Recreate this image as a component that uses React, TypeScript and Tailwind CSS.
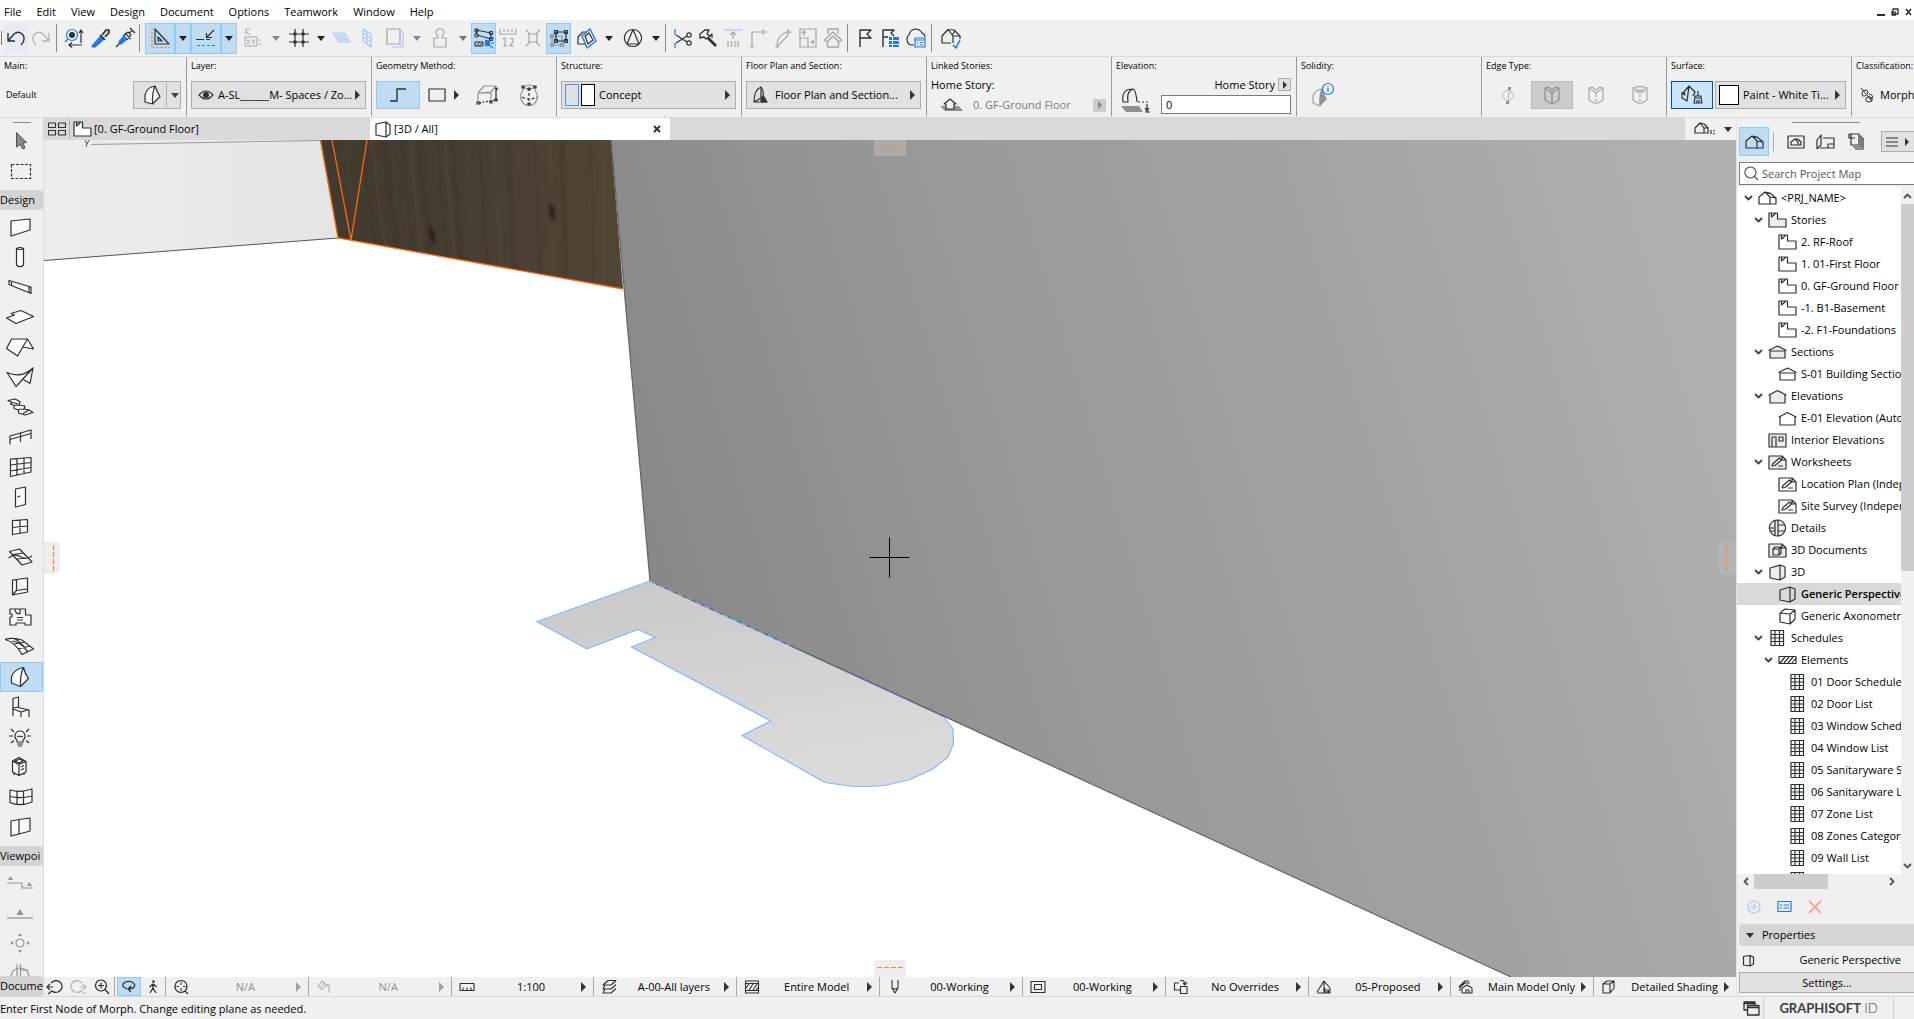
import React from 'react';

type IconProps = {
  d?: string;
  w?: number;
  h?: number;
  color?: string;
  fill?: string;
  sw?: number;
  children?: React.ReactNode;
};

const INK = '#263238';
const BLUE = '#1f78f0';
const PALE = '#a9c6f5';
const GREY = '#a3a5a6';

function Icon({ d, w = 24, h = 24, color = INK, fill = 'none', sw = 1.2, children }: IconProps) {
  return (
    <svg
      width={w}
      height={h}
      viewBox={`0 0 ${w} ${h}`}
      fill={fill}
      stroke={color}
      strokeWidth={sw}
      strokeLinejoin="round"
      className="shrink-0"
      aria-hidden="true"
    >
      {d && <path d={d} />}
      {children}
    </svg>
  );
}

function Right({ color = '#333' }: { color?: string }) {
  return <Icon w={6} h={10} color="none" fill={color} d="M0 0L5 5L0 10Z" />;
}

function Down({ color = '#222' }: { color?: string }) {
  return <Icon w={8} h={5} color="none" fill={color} d="M0 0H8L4 5Z" />;
}

/* ---------- top toolbar ---------- */

type Tool = { label: string; cls: string; icon: React.ReactNode; on?: boolean };

const arrow = (color?: string) => <Down color={color} />;

const TOOLS: (Tool | 'sep')[] = [
  { label: 'Undo', cls: 'w-6 bg-[#e8ebf0] ml-1', icon: <Icon w={20} h={20} sw={1.4} d="M2 5V13H9M2 13L8 6Q13 2 17 7Q20 12 15 17" /> },
  { label: 'Redo', cls: 'w-[26px]', icon: <Icon w={20} h={20} sw={1.4} color="#b5b7b8" d="M18 5V13H11M18 13L12 6Q7 2 3 7Q0 12 5 17" /> },
  'sep',
  {
    label: 'Find and Select',
    cls: 'w-[25px] ml-[3px]',
    icon: (
      <Icon w={22} h={22}>
        <circle cx="8" cy="8" r="5.5" stroke={BLUE} />
        <circle cx="8" cy="8" r="3" fill={INK} stroke="none" />
        <path d="M4 12L1 15" stroke={BLUE} />
        <path d="M17 4V16M15 6L17 3L19 6M5 18H18M8 15.500L5 18L8 20.500" />
      </Icon>
    ),
  },
  {
    label: 'Pick Up Parameters',
    cls: 'w-[25px]',
    icon: (
      <Icon w={22} h={22}>
        <path d="M3 19L12 9M12 9L15 12L6 20L3 20Z" fill={BLUE} stroke={BLUE} />
        <path d="M11 8L16 13M13 8L17 3L20 3L20 6L16 10" fill="#c9ccce" strokeWidth="1.6" />
      </Icon>
    ),
  },
  {
    label: 'Inject Parameters',
    cls: 'w-[25px]',
    icon: (
      <Icon w={22} h={22}>
        <path d="M2 20L6 16" />
        <path d="M5 15L10 9L13 12L7 17Z" fill={BLUE} stroke={BLUE} />
        <path d="M9 9L14 5L17 8L13 13M15 6L18 4M16 1L21 6M11 6L17 12" />
      </Icon>
    ),
  },
  'sep',
  {
    label: 'Guide Lines',
    cls: 'w-[30px] ml-[3px]',
    on: true,
    icon: (
      <Icon w={24} h={24}>
        <path d="M7 3V18H21ZM10 11V15H14Z" />
        <path d="M4 2V21.5H22" stroke="#e8842c" strokeDasharray="2 2" />
      </Icon>
    ),
  },
  { label: 'Guide Line options', cls: 'w-4', on: true, icon: arrow() },
  {
    label: 'Snap Guides',
    cls: 'w-[30px]',
    on: true,
    icon: (
      <Icon w={24} h={24}>
        <path d="M2 13.500H10M12 13.500H16M20 4L13 11M12.500 7V11.500H18" />
        <path d="M3 19.500H21" stroke={BLUE} strokeDasharray="3 2" />
      </Icon>
    ),
  },
  { label: 'Snap Guide options', cls: 'w-4', on: true, icon: arrow() },
  {
    label: 'Tracker',
    cls: 'w-8',
    icon: (
      <Icon w={20} h={22} color={GREY} sw={1}>
        <path d="M3 2V7M3 2H7M3 4.500L7 8M2 10H14V19H2ZM4 12.500L7 17M7 12.500L4 17M9 12.500L10.500 15V17M12 12.500L10.500 15M17 12V14M17 16V18" />
      </Icon>
    ),
  },
  { label: 'Tracker options', cls: 'w-3.5', icon: arrow('#888') },
  {
    label: 'Grid Snap',
    cls: 'w-[31px]',
    icon: (
      <Icon w={20} h={20} d="M0 6H20M0 14H20M6 1V19M14 1V19">
        <path d="M4.500 4.500h3v3h-3zM12.500 4.500h3v3h-3zM4.500 12.500h3v3h-3zM12.500 12.500h3v3h-3z" fill={INK} stroke="none" />
      </Icon>
    ),
  },
  { label: 'Grid options', cls: 'w-3.5', icon: arrow() },
  { label: 'Editing Plane', cls: 'w-[26px]', icon: <Icon w={20} h={20} color={PALE} d="M2 5H13L19 14H8ZM5.5 5L11.5 14M9.5 5L15.5 14M4 8H15M6 11H17" /> },
  { label: 'Vertical Plane', cls: 'w-[26px]', icon: <Icon w={12} h={22} color={PALE} d="M2 2L10 7V20L2 14ZM2 6L10 11M2 10L10 15.5M6 4.5V17" /> },
  {
    label: 'Trace',
    cls: 'w-[30px]',
    icon: (
      <Icon w={22} h={22} color={GREY}>
        <path d="M5 5H19V20H8" stroke={PALE} />
        <path d="M3 2H16V17H3Z" fill="#f0f0f0" />
      </Icon>
    ),
  },
  { label: 'Trace options', cls: 'w-3.5', icon: arrow('#888') },
  { label: 'Gravity', cls: 'w-8', icon: <Icon w={16} h={22} color={GREY} d="M6 9A4 4 0 1 1 10 9V11H14V20H2V11H6Z" /> },
  { label: 'Gravity options', cls: 'w-3.5', icon: arrow('#777') },
  {
    label: 'Magic Wand',
    cls: 'w-[25px] ml-px',
    on: true,
    icon: (
      <Icon w={22} h={22}>
        <path d="M3 3L18 6L18 12L4 8ZM2 2h3v3h-3zM16.500 4.500h3v3h-3zM16.500 10.500h3v3h-3zM2 7h3v3h-3zM2 15H10V19H2ZM3 19L7 15M6 19L10 15" strokeWidth="1" />
        <path d="M12 13H17V19H12Z" fill={BLUE} stroke="none" />
        <path d="M18 13L21 11M18 16H21M17 19L20 21" stroke={BLUE} />
      </Icon>
    ),
  },
  {
    label: 'Ruler',
    cls: 'w-6',
    icon: <Icon w={20} h={22} color={GREY} sw={1.1} d="M2 2V7H18V2M6 2V5M10 2V5M14 2V5M5 12L7 11V19M5 19H9M12 12Q15 10 15 13Q15 15 12 19H16" />,
  },
  { label: 'Explode', cls: 'w-[25px]', icon: <Icon w={18} h={20} color={GREY} d="M5 6H13V14H5ZM2 2L6 6M16 2L12 6M2 18L6 14M16 18L12 14" /> },
  {
    label: 'Suspend Groups',
    cls: 'w-[25px] ml-px',
    on: true,
    icon: (
      <Icon w={22} h={22}>
        <path d="M4 9H14V18H4ZM2.500 7.500h3v3h-3zM12.500 16.500h3v3h-3zM2.500 16.500h3v3h-3z" stroke="#8a969e" />
        <path d="M8 5H18V14H8ZM6.500 3.500h3v3h-3zM16.500 3.500h3v3h-3zM16.500 12.500h3v3h-3zM6.500 12.500h3v3h-3z" />
      </Icon>
    ),
  },
  {
    label: '3D Cutaway',
    cls: 'w-[31px]',
    icon: (
      <Icon w={22} h={22}>
        <path d="M2 17V10L7 5H10M2 17H10" />
        <path d="M14 2L20 14L11 21L6 9Z" stroke={BLUE} strokeWidth="1.400" />
        <path d="M9 9L13 6L17 13L12 17Z" />
      </Icon>
    ),
  },
  { label: 'Cutaway options', cls: 'w-3.5', icon: arrow() },
  { label: 'Element Transfer', cls: 'w-[33px]', icon: <Icon w={20} h={20} d="M10 1.500A8.500 8.500 0 1 1 9.900 1.500ZM10 1.500L4 16H16Z" /> },
  { label: 'Transfer options', cls: 'w-3.5', icon: arrow() },
  'sep',
  {
    label: 'Split',
    cls: 'w-6 ml-[3px]',
    icon: (
      <Icon w={20} h={22}>
        <path d="M2 2V8M2 16V21" stroke={BLUE} />
        <path d="M3 8L14 15M3 16L14 9" />
        <circle cx="16" cy="8" r="2.200" />
        <circle cx="16" cy="16" r="2.200" />
      </Icon>
    ),
  },
  { label: 'Trim', cls: 'w-[25px]', icon: <Icon w={20} h={22} d="M2 11L2 7L7 3L11 3L9 7L12 9L8 12L6 10ZM12 9L14 7L14 11" sw={1.300}><path d="M10 11L18 19" strokeWidth="2.600" /></Icon> },
  {
    label: 'Adjust',
    cls: 'w-[25px]',
    icon: (
      <Icon w={20} h={22} color={GREY}>
        <path d="M1 3H19" stroke={PALE} />
        <path d="M10 5V12M7 8L10 5L13 8M5 14V20M8.500 14V20M12 14V20M15 14V20" />
      </Icon>
    ),
  },
  { label: 'Intersect', cls: 'w-[25px]', icon: <Icon w={20} h={22} color={GREY} d="M4 20V5H19M15 2V8M2 20H6" /> },
  { label: 'Fillet', cls: 'w-[25px]', icon: <Icon w={20} h={22} color={GREY} d="M4 20Q4 6 17 5M13 5H19M15 2V8M4 20L15 8M2 20H6" /> },
  { label: 'Resize', cls: 'w-[25px]', icon: <Icon w={20} h={22} color={GREY} d="M2 2H18V20H2ZM2 11H10V20M6 9V4M4 6L6 4L8 6M12 15H16M14 13L16 15L14 17" /> },
  { label: 'Edit Roof', cls: 'w-[25px]', icon: <Icon w={20} h={22} color={GREY} sw={1.4} d="M5 7V2H15V7M1.500 13L10 5L18.500 13L16 15L10 9L4 15ZM4.500 15V20H15.500V15" /> },
  'sep',
  { label: 'Marker', cls: 'w-[25px] ml-0.5', icon: <Icon w={18} h={22} sw={1.4} d="M4 20V3H15L11 7L15 11H4" /> },
  {
    label: 'Issue Manager',
    cls: 'w-[26px]',
    icon: (
      <Icon w={22} h={22}>
        <path d="M4 20V3H15L12 6L15 9M4 10H9" strokeWidth="1.4" />
        <path d="M10 10h3v3h-3zM14 10h6v3h-6zM10 14h3v3h-3zM14 14h6v3h-6zM10 18h3v2h-3zM14 18h6v2h-6z" fill={BLUE} stroke="none" />
      </Icon>
    ),
  },
  {
    label: 'Cloud Issues',
    cls: 'w-[26px]',
    icon: (
      <Icon w={22} h={22}>
        <path d="M9 18H6Q2 17 2 12Q2 9 4 8Q5 3 10 2Q15 2 17 6Q20 7 20 10" />
        <path d="M10 11H20V20H10ZM10 13H20M12 15.500H13M15 15.500H18M12 18H13M15 18H18" stroke={BLUE} />
      </Icon>
    ),
  },
  'sep',
  {
    label: 'Model Check',
    cls: 'w-[25px] ml-1',
    icon: (
      <Icon w={22} h={22}>
        <path d="M11 16H2V9L8 2.500L13 9V16M8 2.500L14 3L20 9V12M13 9H20M12 8L15 4" />
        <path d="M13 18L16 21L20 13" stroke={BLUE} strokeWidth="1.600" />
      </Icon>
    ),
  },
];

/* ---------- left tool palette ---------- */

const DESIGN_TOOLS: [string, string][] = [
  ['Wall', 'M6 6L25 4V15L6 21Z'],
  ['Column', 'M11.500 3.500Q15 1.500 18.500 3.500V20Q15 23.500 11.500 20ZM11.500 3.500Q15 5.500 18.500 3.500'],
  ['Beam', 'M4 5.500V9.500L26 18.500V12ZM6.500 6V10.500M24 11.500V17.500'],
  ['Slab', 'M1.500 13L9.500 10L6 8.500L16 5.500L28.500 11.500L11 18.500Z'],
  ['Roof', 'M6.500 4H22.500L28.500 14L18 12M22.500 4L12.500 21L1.500 13.500L6.500 4'],
  ['Shell', 'M2 7.500Q16 14 28 3L11 21.500ZM28 3L25 18.500L18.500 14.500'],
  ['Stair', 'M3 5.500L10 4L15 6.500L14 10L20 11L19 14L24 15L28 17.500L20 20L13.500 18V15L9 13.500V10.500L5.500 9L7 7.500ZM9 10.500L14 10M13.500 14.500L19 14M7 7.500L13 9M18 18.500L24 15'],
  ['Railing', 'M5 19.500V11L26 5V14M5 14.500L26 8.500M15.500 8.500V17'],
  ['Curtain Wall', 'M5.500 4L26 2.500V17L5.500 21.500ZM12 3.500V20M19 3V18.500M5.500 10L26 7.500M5.500 16L26 12.500'],
  ['Door', 'M10.500 4L20.500 2V19.500L10.500 22ZM12.500 12L15 11'],
  ['Window', 'M7.500 5.500L22.500 4.500V17L7.500 19.500ZM15 5V18M7.500 12.500L22.500 11'],
  ['Skylight', 'M4.500 6.500L14.500 4L27 17L17 20ZM3.500 13Q10 8 16 12Q21 15 27 11M8 9.500L18 8M12 14L22 13'],
  ['Opening', 'M7.500 5L22.500 3V17L7.500 20ZM11.500 4.500V15.500L22.500 14M11.500 15.500L7.500 20'],
  ['Zone', 'M5 4H20.500V10H26V20H20V18H11V20H5V12H7V9H5ZM10 4Q10 9 15 9M15 4V9M12 12.500H18M12 15H18'],
  ['Mesh', 'M0 4.500Q8 2 17 5L28.500 14L17 19.500Q10 7 0 4.500ZM7 6Q15 6 23 17M9 3.500Q17 7 22 16.500M9 9L20 7M13 14L25 11'],
  ['Morph', 'M6.500 18V12Q9 4 18.500 2.500Q15 9 15.500 21.500ZM18.500 2.500Q20 9 23.500 13.500L15.500 21.500'],
  ['Object', 'M8 21V3.500L13.500 2V12.500L24 15V22M8 13L13.500 12M8 14L16 17L24 14.500M16 17V22'],
  ['Lamp', 'M15 6A5 5 0 0 1 18 15V17H12V15A5 5 0 0 1 15 6ZM12 19H18M13 21H17M6 4L9 7M24 4L21 7M4 11H8M22 11H26M6 18L9 15.500M24 18L21 15.500M12 12L14 11L16 12L18 11'],
  ['Equipment', 'M7.500 6L14 2.500L21 6.500V17L14 20.500L7.500 17ZM7.500 6L14 9.500V20.500M14 9.500L21 6.500M10 6L15 4L18 6L14 8ZM9 17V20M19 18V20M16 12L19 10.500M16 15L19 13.500'],
  ['Facade', 'M5 5Q15 8 27 4V17Q15 22 5 17.500ZM12 6.500V19.500M18.500 6.500V19.500M5 11.500Q15 14 27 11'],
  ['Panel', 'M6 6L14 4.500V19L6 21ZM14 4.500L25 3V16L14 19'],
];

const VIEW_TOOLS: [string, string, string][] = [
  ['Section', 'M2 12H17V17H28', 'M3 9L5.500 5L8 9ZM22 15L24.500 11L27 15Z'],
  ['Elevation', 'M2 17H28', 'M11.500 14L15 8L18.500 14Z'],
  ['Interior Elevation', 'M15 8A4 4 0 1 1 14.900 8', 'M13 5L15 2L17 5ZM13 19L15 22L17 19ZM8 10V14L5 12ZM22 10V14L25 12Z'],
  ['Detail', 'M6 16A9 9 0 1 1 24 16M12 3.500V16M15.500 3V16M15.500 9H23', ''],
];

function PaletteHeader({ text }: { text: string }) {
  return (
    <button className="block h-5 w-full shrink-0 overflow-hidden rounded-r-sm bg-[#d3d3d3] text-left whitespace-nowrap">{text}</button>
  );
}

function LeftPalette() {
  return (
    <aside className="flex w-11 shrink-0 flex-col overflow-hidden border-r border-[#d9d9d9]">
      <div className="mx-auto mt-1 mb-[3px] h-px w-[18px] shrink-0 bg-[#8a8a8a]" />
      <button aria-label="Arrow" className="flex h-[30px] shrink-0 items-center pl-[5px]">
        <Icon w={30} h={24}>
          <path d="M11.500 3.500L21.500 13.500L18 14L20 19L17.500 20L15.500 15.500L11.500 18Z" fill="#888c8f" stroke="#4b5358" strokeWidth="1" />
        </Icon>
      </button>
      <button aria-label="Marquee" className="flex h-[30px] shrink-0 items-center pl-[5px]">
        <Icon w={30} h={24}>
          <path d="M6.500 5.500H25.500V19.500H6.500Z" strokeDasharray="3 1.500" />
        </Icon>
      </button>
      <div className="mt-1 mb-0.5 shrink-0">
        <PaletteHeader text="Design" />
      </div>
      {DESIGN_TOOLS.map(([name, d]) => (
        <button
          key={name}
          aria-label={name}
          className={`flex h-[30px] shrink-0 items-center ${name === 'Morph' ? 'border border-[#91c9f7] bg-[#bfdcf2] pl-1' : 'pl-[5px]'}`}
        >
          <Icon w={30} h={24} d={d} fill="#fafafa" />
        </button>
      ))}
      <div className="mt-1 mb-0.5 shrink-0">
        <PaletteHeader text="Viewpoi" />
      </div>
      <div className="flex min-h-0 flex-1 flex-col overflow-hidden">
        {VIEW_TOOLS.map(([name, d, f]) => (
          <button key={name} aria-label={name} className="flex h-[30px] shrink-0 items-center pl-[5px]">
            <Icon w={30} h={24} d={d} color="#8d9396">
              {f && <path d={f} fill="#8d9396" stroke="none" />}
            </Icon>
          </button>
        ))}
      </div>
      <PaletteHeader text="Docume" />
    </aside>
  );
}

/* ---------- info box ---------- */

function Section({ label, children, cls = 'w-[185px]' }: { label: string; children: React.ReactNode; cls?: string }) {
  return (
    <section className={`flex h-[59px] shrink-0 flex-col border-r border-[#9a9a9a] pr-[5px] pl-1 ${cls}`}>
      <h2 className="h-4 text-[9px] leading-[18px] whitespace-nowrap">{label}</h2>
      {children}
    </section>
  );
}

const comboCls = 'flex h-7 w-full items-center border border-[#acacac] bg-[#e1e1e1] pr-1 whitespace-nowrap';
const rowCls = 'mt-2 flex items-center';

const MORPH = 'M5 19V12Q7 4 15 3Q12 9 12.500 21ZM15 3Q17 9 20 13.500L12.500 21';

function EdgeBox({ d, on, dash }: { d: string; on?: boolean; dash?: string }) {
  return (
    <button aria-label="Edge type" className={`flex h-7 w-[42px] items-center justify-center ${on ? 'border border-[#bcbcbc] bg-[#cccccc]' : ''}`}>
      <Icon w={18} h={20} color={on ? '#8b8f92' : '#a9acae'} sw={1.3} d={d}>
        {dash && <path d={dash} strokeDasharray="3 2" />}
      </Icon>
    </button>
  );
}

function InfoBox() {
  return (
    <div className="flex h-[61px] shrink-0 overflow-hidden border-b border-[#d9d9d9]">
      <Section label="Main:" cls="w-[187px]">
        <div className={`${rowCls} justify-between pl-0.5`}>
          <span className="text-[9px]">Default</span>
          <button aria-label="Morph settings" className="flex h-7 w-12 items-center border border-[#acacac] bg-[#e1e1e1] pl-1.5">
            <Icon w={22} h={24} d={MORPH} fill="#fafafa" />
            <span className="mx-1 h-6 w-px shrink-0 bg-[#b0b0b0]" />
            <Down color="#444" />
          </button>
        </div>
      </Section>
      <Section label="Layer:">
        <div className={rowCls}>
          <button className={`${comboCls} gap-1 pl-1.5`}>
            <Icon w={16} h={12}>
              <path d="M1 6Q8 -2 15 6Q8 14 1 6Z" />
              <circle cx="8" cy="6" r="2.400" fill={INK} />
            </Icon>
            <span className="min-w-0 flex-1 text-left">A-SL______M- Spaces / Zo...</span>
            <Right />
          </button>
        </div>
      </Section>
      <Section label="Geometry Method:">
        <div className={rowCls}>
          <button aria-label="Polygonal" className="flex h-7 w-11 items-center justify-center border border-[#91c9f7] bg-[#bfdcf2]">
            <Icon w={18} h={14} d="M1 13H8V1H17" sw={1.4} />
          </button>
          <button aria-label="Rectangular" className="flex w-[48px] items-center justify-center gap-2">
            <Icon w={18} h={14} d="M1 1H17V13H1Z" />
            <Right />
          </button>
          <button aria-label="Box" className="flex w-[40px] items-center justify-center">
            <Icon w={22} h={22}>
              <path d="M2 9L8 2H20L15 8ZM2 9V19M2 9H15M15 8V15" stroke="#8f9699" />
              <path d="M20 4V16M19 4H21V6M19 15H21V17H19ZM1 18H4V20H1ZM14 17H16V19H14Z" />
              <path d="M3 19L19 16" strokeDasharray="2 1.500" />
            </Icon>
          </button>
          <button aria-label="Revolved" className="flex w-11 items-center justify-center">
            <Icon w={20} h={24}>
              <path d="M4 4Q10 0 16 4Q15 7 18 11Q20 16 15 21Q10 24 5 21Q0 16 2 11Q5 7 4 4Q10 8 16 4" stroke="#8f9699" />
              <path d="M10 5V21M3 14Q10 18 18 14" strokeDasharray="3 2" />
              <path d="M9 5h2v2h-2zM9 20h2v2h-2zM3 3h2v2h-2zM15 3h2v2h-2z" />
            </Icon>
          </button>
        </div>
      </Section>
      <Section label="Structure:">
        <div className={rowCls}>
          <button className={`${comboCls} gap-0.5 pl-[3px]`}>
            <span className="h-[22px] w-3.5 border border-[#3b9bf2]" />
            <span className="h-[22px] w-3.5 border border-black bg-white" />
            <span className="flex-1 pl-0.5 text-left">Concept</span>
            <Right />
          </button>
        </div>
      </Section>
      <Section label="Floor Plan and Section:">
        <div className={rowCls}>
          <button className={`${comboCls} gap-1.5 pl-1.5`}>
            <Icon w={16} h={18}>
              <path d="M1 16Q1 4 8 1V16ZM1 16L8 12" />
              <path d="M8 1Q11 5 10 9L14 16H8" />
              <path d="M9 10L13 16H9Z" fill={INK} />
            </Icon>
            <span className="flex-1 text-left">Floor Plan and Section...</span>
            <Right />
          </button>
        </div>
      </Section>
      <Section label="Linked Stories:">
        <span className="h-5 leading-6">Home Story:</span>
        <div className="mt-1 flex items-center gap-2.5 pl-2">
          <Icon w={24} h={14}>
            <path d="M1 8H20L24 13H6Z" fill="#8b9195" stroke="none" />
            <path d="M5 6L11 1L17 6H15V11H7V6Z" fill="#f0f0f0" />
          </Icon>
          <span className="flex-1 text-[#7c7c7c]">0. GF-Ground Floor</span>
          <button aria-label="Choose story" className="flex h-[13px] w-[13px] items-center justify-center bg-[#cccccc] pl-px">
            <Icon w={5} h={8} color="none" fill="#8a8a8a" d="M0 0L4 4L0 8Z" />
          </button>
        </div>
      </Section>
      <Section label="Elevation:">
        <div className="mt-1 flex items-start">
          <span className="mt-2.5 w-[45px] shrink-0 pl-1">
            <Icon w={32} h={28}>
              <path d="M3 15Q1 2 13 2Q16 3 17 15M3 15H8Q6 5 13 2" />
              <path d="M1 19H19L23 25H6Z" fill="#8b9195" stroke="none" />
              <path d="M18 15H29" strokeDasharray="2 2" />
              <path d="M27 17V24M25 25H30M25 21L27 24L29 21" />
            </Icon>
          </span>
          <div className="flex min-w-0 flex-1 flex-col">
            <div className="flex h-[15px] items-center justify-end gap-[3px]">
              <label htmlFor="elevation" className="leading-4">Home Story</label>
              <button aria-label="Reference story" className="flex h-[13px] w-[13px] items-center justify-center border border-[#acacac] bg-[#e1e1e1] pl-px">
                <Icon w={5} h={8} color="none" fill="#333" d="M0 0L4 4L0 8Z" />
              </button>
            </div>
            <input id="elevation" defaultValue="0" className="mt-[3px] h-[19px] w-full border border-[#7a7a7a] bg-white px-1 outline-none" />
          </div>
        </div>
      </Section>
      <Section label="Solidity:">
        <button aria-label="Solidity" className="mt-2 flex h-7 w-[42px] items-center justify-center">
          <Icon w={26} h={26}>
            <path d="M4 21V14Q6 8 13 7Q10 13 11 24Z" stroke="#9a9fa2" />
            <path d="M13 7Q15 13 18 17L11 24Q10 13 13 7Z" fill="#8b9195" stroke="none" />
            <circle cx="19" cy="7" r="5.500" stroke={BLUE} fill="#f0f0f0" />
            <path d="M19 6V10M19 4V5" stroke={BLUE} />
          </Icon>
        </button>
      </Section>
      <Section label="Edge Type:">
        <div className="mt-2 flex items-center gap-0.5">
          <span className="flex w-[43px] justify-center">
            <Icon w={16} h={20} color="#b0b3b5" sw={1}>
              <path d="M9 4Q4 6 2 11L8 18L14 11ZM9 4L8 18" />
              <path d="M8 2h3v3h-3zM6 16h3v3h-3z" fill="#8b9195" stroke="none" />
            </Icon>
          </span>
          <EdgeBox on d="M2 3V15L9 19L16 15V3L9 8ZM9 8V19M2 3L5 2L9 5L13 2L16 3" />
          <EdgeBox d="M2 3V15L9 19L16 15V3L9 8ZM2 3L5 2L9 5L13 2L16 3" dash="M9 9V18" />
          <EdgeBox d="M2 3V15L9 19L16 15V3Q9 8 2 3ZM2 3Q9 0 16 3M4 6Q9 9 14 6" dash="M9 9V18" />
        </div>
      </Section>
      <Section label="Surface:">
        <div className={`${rowCls} gap-0.5`}>
          <button aria-label="Override surface" className="flex h-7 w-[42px] shrink-0 items-center justify-center border border-[#005499] bg-[#cce4f7]">
            <Icon w={24} h={22}>
              <path d="M9 2L4 8L2 9V14L7 17ZM9 2L15 8L13 12M9 2L7 17M4 8L5 11L2 9" />
              <path d="M18 7V12M15 12H21V14H15ZM15 14L14 19H22L21 14M17 16V19M19 16V19" />
            </Icon>
          </button>
          <button className={`${comboCls} min-w-0 gap-1 pl-[3px]`}>
            <span className="h-5 w-5 shrink-0 border border-black bg-white" />
            <span className="flex-1 text-left">Paint - White Ti...</span>
            <Right />
          </button>
        </div>
      </Section>
      <section className="flex h-[59px] min-w-0 flex-1 flex-col overflow-hidden pl-1">
        <h2 className="h-4 text-[9px] leading-[18px] whitespace-nowrap">Classification:</h2>
        <div className="mt-2 flex h-7 items-center gap-1.5 pl-1">
          <Icon w={14} h={16} sw={1}>
            <path d="M1 1L12 14M2 7Q2 3 6 3Q8 3 8 6L5 9Q2 10 2 7ZM9 7Q12 7 13 10L10 12M6 11Q9 8 12 11V14L8 15Q5 14 6 11Z" />
          </Icon>
          <span>Morph</span>
        </div>
      </section>
    </div>
  );
}

/* ---------- shared drawings ---------- */

const STORY = 'M1 2H9.500V8H18V16H1ZM3.500 2V6L7.500 2.500';
const BOX3D = 'M2 5L12 2L17 4V14L12 17L2 15ZM12 2V17';
const HOUSE = 'M1 15V8L7 3L12 8V15ZM7 3L12 4L18 9V15H12M12 8L18 9M9 5L12 4';

/* ---------- tabs ---------- */

function TabBar() {
  return (
    <div className="flex h-[22px] shrink-0 bg-[#d9d9d9]" role="tablist">
      <button aria-label="Tab overview" className="flex w-[26px] items-center justify-center border-r border-[#b5b5b5]">
        <Icon w={18} h={14} sw={1.1} d="M.5 1H7.500V5.500H.5ZM10.500 1H17.500V5.500H10.500ZM.5 8.500H7.500V13H.5ZM10.500 8.500H17.500V13H10.500Z" />
      </button>
      <button role="tab" aria-selected="false" className="flex w-[300px] items-center gap-0.5 pl-[3px]">
        <Icon w={19} h={18} d={STORY} fill="#fff" />
        [0. GF-Ground Floor]
      </button>
      <div className="flex w-[300px] items-center bg-white pr-[5px] pl-1">
        <button role="tab" aria-selected="true" className="flex flex-1 items-center gap-px">
          <Icon w={19} h={19} d="M2 4L12 2L16 5V14L12 17L2 15ZM12 2V17" />
          [3D / All]
        </button>
        <button aria-label="Close tab" className="flex h-4 w-4 items-center justify-center">
          <Icon w={8} h={8} sw={1.800} d="M1 1L7 7M7 1L1 7" />
        </button>
      </div>
      <div className="flex-1" />
      <button aria-label="3D view options" className="flex w-[51px] items-center justify-center gap-2 bg-[#f0f0f0] pl-1">
        <Icon w={22} h={16} d="M1 12V7L6 2L10 7V12ZM6 2L10 3L14 7V12H10M10 7H14M17 9V13M20 9V10.500M20 12V13.500" />
        <Down color="#333" />
      </button>
    </div>
  );
}

/* ---------- 3D viewport ---------- */

function Dashes({ x, y, vertical }: { x: number; y: number; vertical?: boolean }) {
  return (
    <path d={vertical ? `M${x} ${y}V${y + 26}` : `M${x} ${y}H${x + 26}`} stroke="#f08a35" strokeWidth="1.200" strokeDasharray="5 2" fill="none" />
  );
}

const GRAIN = [345, 362, 372, 384, 391, 401, 410, 419, 428, 437, 445, 452, 466, 479, 493, 507, 518, 534, 549, 561, 578, 590, 602];

function Viewport() {
  return (
    <main className="min-h-0 flex-1 overflow-hidden bg-white">
      <svg className="block h-full w-full" viewBox="44 140 1692 837" preserveAspectRatio="xMinYMin slice" role="img" aria-label="3D perspective view">
        <defs>
          <linearGradient id="wall" gradientUnits="userSpaceOnUse" x1="600" y1="580" x2="1700" y2="250">
            <stop offset="0" stopColor="#868686" />
            <stop offset="0.340" stopColor="#979797" />
            <stop offset="0.650" stopColor="#a2a2a2" />
            <stop offset="1" stopColor="#b0b0b0" />
          </linearGradient>
          <linearGradient id="slab" x1="0" y1="0" x2="0.300" y2="1">
            <stop offset="0" stopColor="#c9c9c9" />
            <stop offset="1" stopColor="#dadada" />
          </linearGradient>
          <linearGradient id="wood" x1="0" y1="0" x2="1" y2="0">
            <stop offset="0" stopColor="#413a2f" />
            <stop offset="0.500" stopColor="#473d31" />
            <stop offset="1" stopColor="#514536" />
          </linearGradient>
          <linearGradient id="left" x1="0" y1="0" x2="1" y2="0">
            <stop offset="0" stopColor="#ededed" />
            <stop offset="1" stopColor="#e5e5e5" />
          </linearGradient>
          <radialGradient id="knot">
            <stop offset="0" stopColor="#281d12" />
            <stop offset="1" stopColor="#281d12" stopOpacity="0" />
          </radialGradient>
          <clipPath id="woodClip">
            <path d="M320 140L338 238L623 289L611 140Z" />
          </clipPath>
        </defs>
        <path d="M44 140H321L338 238L44 261Z" fill="url(#left)" />
        <path d="M44 260.500L338 238" stroke="#555" fill="none" />
        <path d="M91 144.500L320 140.500" stroke="#9a9a9a" fill="none" />
        <path d="M85 140L87 144L89 140M87 144L86 147" stroke="#555" fill="none" />
        <path d="M320 140L338 238L623 289L611 140Z" fill="url(#wood)" />
        <g clipPath="url(#woodClip)" fill="none">
          {GRAIN.map((x, i) => (
            <path key={x} d={`M${x} 130Q${x + 3} 190 ${x + 24 - i} 300`} stroke={i % 2 ? '#2e271e' : '#6a5d4a'} strokeOpacity="0.140" strokeWidth={1 + (i % 4) * 1.500} />
          ))}
          <ellipse cx="432" cy="235" rx="5" ry="13" transform="rotate(-16 432 235)" fill="url(#knot)" />
          <ellipse cx="552" cy="212" rx="5" ry="13" transform="rotate(-12 552 212)" fill="url(#knot)" />
        </g>
        <path d="M320.500 140L338 238L623 289M332 140L351 240L367 140" stroke="#ff6a10" strokeWidth="1.300" fill="none" />
        <path
          d="M650 581L537 621.500L586 648.500H588L638 629.500L655 637.500L631.500 647L771 721L742 735.500L825 782.500L853 786.500H868L885 785.500L910 779.500L933 769L948 757L953.500 743.500L953 729L944 717Z"
          fill="url(#slab)"
          stroke="#7dbcfb"
          strokeWidth="1.200"
        />
        <path d="M611 140H1736V977H1511L650 581Z" fill="url(#wall)" />
        <path d="M611 140L650 581L1511 977" stroke="#636363" strokeWidth="1.200" fill="none" />
        <path d="M650 581L790 645.500" stroke="#7dbcfb" strokeDasharray="6 4" fill="none" />
        <path d="M869.500 557.500H909.500M889.500 537.500V577.500" stroke="#000" fill="none" />
        <path d="M874 140H906V153Q906 156 903 156H877Q874 156 874 153Z" fill="#ababab" />
        <Dashes x={877} y={149.500} />
        <path d="M874 977V963Q874 960 877 960H903Q906 960 906 963V977Z" fill="#eeeeee" />
        <Dashes x={877} y={967.500} />
        <path d="M44 542H57Q60 542 60 545V571Q60 574 57 574H44Z" fill="#eeeeee" />
        <Dashes x={53.500} y={545} vertical />
        <path d="M1736 542H1722Q1719 542 1719 545V571Q1719 574 1722 574H1736Z" fill="#b4b4b4" />
        <Dashes x={1726.500} y={545} vertical />
      </svg>
    </main>
  );
}

/* ---------- quick options bar ---------- */

const OPTIONS: { text: string; d: string; dim?: boolean }[] = [
  { text: 'N/A', d: 'M8 1.500A6 6 0 1 1 7.900 1.500M12 12L15 15M8 3V6M8 9V12M3.500 7.500H6M10 7.500H12.500' },
  { text: 'N/A', d: 'M2 7L6 2L10 6L6 11ZM4 9L8 4M12 14Q15 10 12 6M10 8L12 5L14 8', dim: true },
  { text: '1:100', d: 'M1 4.500H15V11.500H1ZM4 8.500V11.500M8 8.500V11.500M12 8.500V11.500' },
  { text: 'A-00-All layers', d: 'M2 6L7 1.500H15L10 6ZM4 6L2 10H10L15 5.500M4 10L2 14H10L15 9.500' },
  { text: 'Entire Model', d: 'M1.500 2H14.500V14H1.500ZM1.500 11.500H14.500M1.500 4.500H14.500M2 9L5 5M5 11L9 5M9 11L13 5M12 11L14.500 8' },
  { text: '00-Working', d: 'M5 1V9L8 14L11 9V1M5 9Q8 11 11 9' },
  { text: '00-Working', d: 'M1 2.500H15V13.500H1ZM4.500 5.500H11.500V10.500H4.500Z' },
  { text: 'No Overrides', d: 'M7 11H1.500V4H6M7.500 7.500H14V14.500H7.500ZM7 2Q11 0 12 5M10 4L12 6L14 3' },
  { text: '05-Proposed', d: 'M1 13L8 2V14H1M8 2L14 9M9 9V14H14V9M11 14V11H12.500V14' },
  { text: 'Main Model Only', d: 'M1 8L5 4L7 2H11M2 12V8L7 4H12M4 14V9L9 6L14 9V14H4M8 14V11H11V14' },
  { text: 'Detailed Shading', d: 'M2 5L6 2H13V9L9 14H2ZM2 5H9V14M9 5L13 2' },
];

function QuickOptions() {
  return (
    <div className="flex h-[19px] shrink-0 whitespace-nowrap">
      <button aria-label="Previous zoom" className="flex w-[22px] items-center justify-center">
        <Icon w={18} h={16} d="M5 4Q10 -1 15 4Q18 10 12 13Q8 14 6 12L2 15M7 8H1M4 5L1 8L4 11" />
      </button>
      <button aria-label="Next zoom" className="flex w-[23px] items-center justify-center">
        <Icon w={18} h={16} color="#b5b7b8" d="M13 4Q8 -1 3 4Q0 10 6 13Q10 14 12 12L16 15M11 8H17M14 5L17 8L14 11" />
      </button>
      <button aria-label="Zoom in" className="flex w-[25px] items-center justify-center">
        <Icon w={17} h={17} d="M8 2A5.500 5.500 0 1 1 7.900 2M12 11.500L16 16M5 7.500H11M8 4.500V10.500" />
      </button>
      <span className="mr-0.5 w-px bg-[#a8a8a8]" />
      <button aria-label="Orbit" className="flex w-6 items-center justify-center border border-[#91c9f7] bg-[#bfdcf2]">
        <Icon w={16} h={15} d="M6 10Q1 8 2 5Q5 1 11 3Q16 6 12 9L8 10M10 7L7 10L10 13" sw={1.300} />
      </button>
      <button aria-label="Explore" className="flex w-6 items-center justify-center">
        <Icon w={12} h={16} d="M6 4.500V9L3 14M6 9L9 14M2.500 8L6 5L9.500 8" sw={1.300}>
          <circle cx="6.500" cy="2.500" r="1.300" fill={INK} stroke="none" />
        </Icon>
      </button>
      {OPTIONS.map((o, i) => (
        <button key={i} className="flex min-w-0 flex-1 items-center border-l border-[#a8a8a8] pr-1.5 pl-[7px]">
          <Icon w={16} h={16} d={o.d} color={o.dim ? '#b0b3b5' : INK} sw={1.100} />
          <span className={`flex-1 ${i < 2 ? 'pl-1.5 text-center text-[#8f8f8f]' : i < 9 ? 'pl-1.5 text-center' : 'pr-1.5 text-right'}`}>{o.text}</span>
          <Right color={i < 2 ? '#a0a0a0' : '#333'} />
        </button>
      ))}
    </div>
  );
}

/* ---------- navigator ---------- */

type Kind = 'project' | 'story' | 'section' | 'elevation' | 'interior' | 'sheet' | 'detail' | 'doc' | 'persp' | 'axo' | 'table' | 'hatch';

const NAV_ICON: Record<Kind, string> = {
  project: HOUSE,
  story: STORY,
  section: 'M2 8H17V15H2ZM0.500 7.500L9.500 3L18.500 7.500',
  elevation: 'M2 16V8L1 8L9.500 3.500L18 8H17V16Z',
  interior: 'M1 3H18V16H1ZM4 16V6H8V16M11 6H15V10H11Z',
  sheet: 'M1 3H14L18 7V16H1ZM14 3V7H18M4 13L5 10.500L11.500 5L13.500 7L7 12.500ZM10 13H15',
  detail: 'M9.500 1A8 8 0 1 1 9.400 1M7 1.500V16.500M10 1V17M2 9H7M10 6H16.500M10 12H16.500M2 12H7',
  doc: 'M1 3H14L18 7V16H1ZM14 3V7H18M5 8H11V14H5ZM5 8L7 6H13V12L11 14M11 8L13 6',
  persp: BOX3D,
  axo: 'M2 6L12 7V17L2 15ZM2 6L7 2L17 3V12L12 17M12 7L17 3',
  table: 'M3 1.500H15.500V16.500H3ZM3 5.500H15.500M3 9H15.500M3 12.500H15.500M7 1.500V16.500M11.500 1.500V16.500',
  hatch: 'M1 5.500H18V12.500H1ZM2 12L7 6M6 12L11 6M10 12L15 6M14 12L18 7',
};

const TREE: { level: number; kind: Kind; text: string; open?: boolean; selected?: boolean }[] = [
  { level: 0, kind: 'project', text: '<PRJ_NAME>', open: true },
  { level: 1, kind: 'story', text: 'Stories', open: true },
  { level: 2, kind: 'story', text: '2. RF-Roof' },
  { level: 2, kind: 'story', text: '1. 01-First Floor' },
  { level: 2, kind: 'story', text: '0. GF-Ground Floor' },
  { level: 2, kind: 'story', text: '-1. B1-Basement' },
  { level: 2, kind: 'story', text: '-2. F1-Foundations' },
  { level: 1, kind: 'section', text: 'Sections', open: true },
  { level: 2, kind: 'section', text: 'S-01 Building Section' },
  { level: 1, kind: 'elevation', text: 'Elevations', open: true },
  { level: 2, kind: 'elevation', text: 'E-01 Elevation (Auto' },
  { level: 1, kind: 'interior', text: 'Interior Elevations' },
  { level: 1, kind: 'sheet', text: 'Worksheets', open: true },
  { level: 2, kind: 'sheet', text: 'Location Plan (Indep' },
  { level: 2, kind: 'sheet', text: 'Site Survey (Indepen' },
  { level: 1, kind: 'detail', text: 'Details' },
  { level: 1, kind: 'doc', text: '3D Documents' },
  { level: 1, kind: 'persp', text: '3D', open: true },
  { level: 2, kind: 'persp', text: 'Generic Perspective', selected: true },
  { level: 2, kind: 'axo', text: 'Generic Axonometry' },
  { level: 1, kind: 'table', text: 'Schedules', open: true },
  { level: 2, kind: 'hatch', text: 'Elements', open: true },
  { level: 3, kind: 'table', text: '01 Door Schedule' },
  { level: 3, kind: 'table', text: '02 Door List' },
  { level: 3, kind: 'table', text: '03 Window Schedule' },
  { level: 3, kind: 'table', text: '04 Window List' },
  { level: 3, kind: 'table', text: '05 Sanitaryware S' },
  { level: 3, kind: 'table', text: '06 Sanitaryware L' },
  { level: 3, kind: 'table', text: '07 Zone List' },
  { level: 3, kind: 'table', text: '08 Zones Category' },
  { level: 3, kind: 'table', text: '09 Wall List' },
  { level: 3, kind: 'table', text: '' },
];

const INDENT = ['pl-1.5', 'pl-4', 'pl-[26px]', 'pl-9'];

function Navigator() {
  return (
    <aside className="flex w-[178px] shrink-0 flex-col overflow-hidden border-l border-[#e2e2e2]">
      <div className="mx-auto mt-1 mb-1 h-px w-[68px] shrink-0 bg-[#8a8a8a]" />
      <div className="flex h-[29px] shrink-0 items-center pl-0.5">
        <button aria-label="Project Map" className="flex h-[29px] w-[30px] items-center justify-center border border-[#91c9f7] bg-[#bfdcf2]">
          <Icon w={19} h={18} d={HOUSE} />
        </button>
        <span className="ml-1 h-[18px] w-px bg-[#a8a8a8]" />
        <button aria-label="View Map" className="ml-[7px] flex w-[30px] items-center justify-center">
          <Icon w={18} h={16} d="M1 2H17V14H1ZM4 11V8L8 5L11 8V11ZM8 5L11 5L14 8V11H11" />
        </button>
        <button aria-label="Layout Book" className="flex w-[30px] items-center justify-center">
          <Icon w={20} h={16} d="M1 15V6L5 1V11L1 15M7 4H18V14H4M12 14V10H18" />
        </button>
        <button aria-label="Publisher" className="flex w-[30px] items-center justify-center">
          <Icon w={18} h={18} d="M2 1H12V12H4V1M2 1V5H8M13 3H14V14H6M15 5H16V16H8" />
        </button>
        <button aria-label="Navigator menu" className="ml-auto flex h-[21px] w-[33px] items-center justify-center gap-1.5 border border-r-0 border-[#acacac] bg-[#e1e1e1]">
          <Icon w={13} h={10} d="M0 1H12M0 5H12M0 9H12" />
          <Icon w={5} h={8} color="none" fill="#333" d="M0 0L4 4L0 8Z" />
        </button>
      </div>
      <label className="mt-1.5 ml-0.5 flex h-[23px] shrink-0 items-center gap-[3px] border border-r-0 border-[#7a7a7a] bg-white pl-1">
        <Icon w={15} h={15} color="#555" d="M6.500 1A5.500 5.500 0 1 1 6.400 1M10.500 10.500L14 14" />
        <input aria-label="Search Project Map" placeholder="Search Project Map" className="min-w-0 flex-1 bg-transparent outline-none placeholder:text-[#555]" />
      </label>
      <div className="mt-0.5 flex min-h-0 flex-1">
        <div role="tree" aria-label="Project Map" className="min-w-0 flex-1 overflow-hidden bg-white">
          {TREE.map((n, i) => (
            <div
              key={i}
              role="treeitem"
              aria-level={n.level + 1}
              aria-selected={!!n.selected}
              aria-expanded={n.open}
              className={`flex h-[22px] items-center whitespace-nowrap ${INDENT[n.level]} ${n.selected ? 'bg-[#d9d9d9] font-semibold' : ''}`}
            >
              <span className="mr-1 flex w-[11px] shrink-0 justify-center">
                {n.open && <Icon w={9} h={6} sw={1.800} color="#444" d="M1 1L4.500 4.500L8 1" />}
              </span>
              <Icon w={19} h={18} d={NAV_ICON[n.kind]} fill={n.level === 1 && n.kind !== 'table' ? '#ececec' : 'none'} />
              <span className="pl-1">{n.text}</span>
            </div>
          ))}
        </div>
        <div className="flex w-[13px] shrink-0 flex-col items-center">
          <div className="flex h-[17px] shrink-0 items-center">
            <Icon w={9} h={6} sw={1.800} color="#555" d="M1 5L4.500 1.500L8 5" />
          </div>
          <div className="h-[367px] w-full bg-[#cdcdcd]" />
          <div className="flex-1" />
          <div className="flex h-[17px] shrink-0 items-center">
            <Icon w={9} h={6} sw={1.800} color="#555" d="M1 1L4.500 4.500L8 1" />
          </div>
        </div>
      </div>
      <div className="flex h-[15px] shrink-0 items-center pr-[19px]">
        <span className="flex w-[17px] justify-center">
          <Icon w={6} h={9} sw={1.800} color="#555" d="M5 1L1.500 4.500L5 8" />
        </span>
        <div className="h-full w-[74px] bg-[#cdcdcd]" />
        <span className="ml-auto">
          <Icon w={6} h={9} sw={1.800} color="#555" d="M1 1L4.500 4.500L1 8" />
        </span>
      </div>
      <div className="flex h-[35px] shrink-0 items-center gap-4 pl-2.5">
        <button aria-label="Add">
          <Icon w={14} h={14} color={PALE} d="M7 1A6 6 0 1 1 6.900 1M3.500 7H10.500M7 3.500V10.500" />
        </button>
        <button aria-label="Properties list">
          <Icon w={15} h={13} color={BLUE} d="M1 1.500H14V11.500H1ZM3 5H5M6.500 5H12M3 8H5M6.500 8H12" />
        </button>
        <button aria-label="Delete">
          <Icon w={14} h={14} color="#f7a598" sw={1.800} d="M1 1L13 13M13 1L1 13" />
        </button>
      </div>
      <button className="ml-0.5 flex h-[22px] shrink-0 items-center gap-2 rounded-l-sm bg-[#d5d5d5] pl-[7px]">
        <Down color="#333" />
        Properties
      </button>
      <div className="mt-1 flex h-5 shrink-0 items-center justify-between pr-[13px] pl-[5px]">
        <Icon w={13} h={13} d="M1.500 2.500L8 1.500L11.500 3V10L8 12L1.500 11ZM8 1.500V12" />
        <span>Generic Perspective</span>
      </div>
      <button className="mt-0.5 mb-[3px] ml-0.5 h-[21px] shrink-0 border border-r-0 border-[#acacac] bg-[#e1e1e1]">Settings...</button>
    </aside>
  );
}

/* ---------- page ---------- */

const MENUS = ['File', 'Edit', 'View', 'Design', 'Document', 'Options', 'Teamwork', 'Window', 'Help'];

export default function App() {
  return (
    <div className="flex h-screen w-full flex-col overflow-hidden bg-[#f0f0f0] font-['Open_Sans',sans-serif] text-[11px] leading-4 text-black">
      <header className="flex h-5 shrink-0 items-end justify-between bg-white pr-0.5 pl-1">
        <nav className="flex gap-[15px]">
          {MENUS.map((m) => (
            <button key={m}>{m}</button>
          ))}
        </nav>
        <div className="flex items-center gap-1.5 pb-1">
          <button aria-label="Minimize">
            <Icon w={8} h={8} sw={2} d="M0 7H8" />
          </button>
          <button aria-label="Restore">
            <Icon w={8} h={8} sw={1.300} d="M2 1H7V6H2ZM1 3V7H5M4 3V6" />
          </button>
          <button aria-label="Close">
            <Icon w={7} h={8} sw={1.600} d="M1 1L6 7M6 1L1 7" />
          </button>
        </div>
      </header>
      <div className="flex h-[37px] shrink-0 items-center border-b border-[#d9d9d9]" role="toolbar" aria-label="Standard">
        <span className="-mr-0.5 ml-px h-3.5 w-px bg-[#777]" />
        {TOOLS.map((t, i) =>
          t === 'sep' ? (
            <span key={i} className="mx-0.5 h-7 w-px shrink-0 bg-[#8a8a8a]" />
          ) : (
            <button
              key={i}
              aria-label={t.label}
              className={`flex h-[31px] shrink-0 items-center justify-center ${t.cls} ${t.on ? 'border border-[#91c9f7] bg-[#bfdcf2]' : ''}`}
            >
              {t.icon}
            </button>
          ),
        )}
      </div>
      <InfoBox />
      <div className="flex min-h-0 flex-1">
        <LeftPalette />
        <div className="flex min-w-0 flex-1 flex-col">
          <TabBar />
          <Viewport />
          <QuickOptions />
        </div>
        <Navigator />
      </div>
      <footer className="flex h-[23px] shrink-0 items-center border-t border-[#d9d9d9]">
        <p className="flex-1 pt-px">Enter First Node of Morph. Change editing plane as needed.</p>
        <div className="flex h-full w-[171px] items-center">
          <button aria-label="Windows">
            <Icon w={17} h={15} sw={1.300} d="M4 9H1V1H12V4M1 2.500H12M4.500 4.500H16V14H4.500ZM4.500 6.500H16" />
          </button>
          <span className="ml-[3px] h-full w-px bg-[#d0d0d0]" />
          <button className="flex-1 text-center font-['Lato',sans-serif] text-[13px] text-[#3a3f42]">
            <span className="font-bold">GRAPHISOFT</span> <span className="font-light">ID</span>
          </button>
          <span className="mr-5 h-full w-px bg-[#d0d0d0]" />
        </div>
      </footer>
    </div>
  );
}
